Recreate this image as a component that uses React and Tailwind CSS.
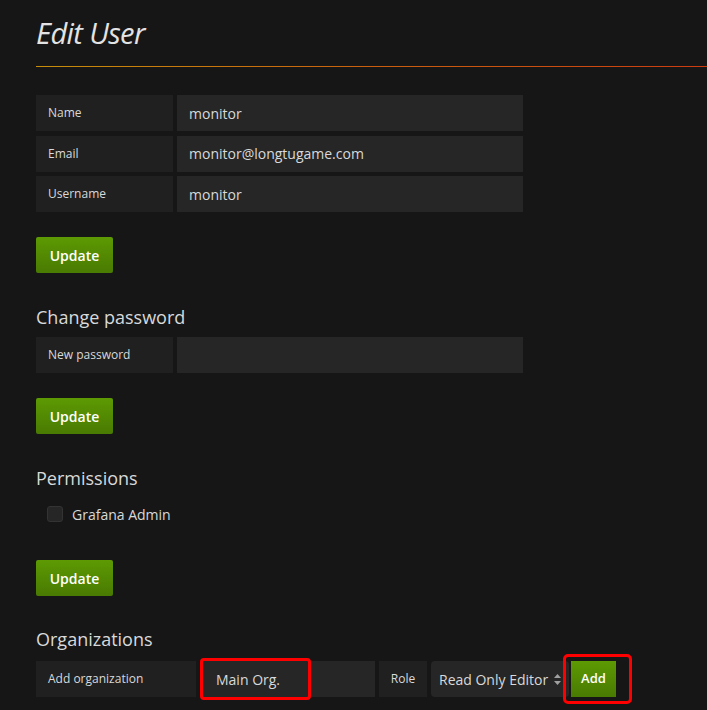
import React from 'react';

const font = { fontFamily: '"Open Sans", "Liberation Sans", sans-serif' };

function Row({ label, value }) {
  return (
    <div className="flex gap-[4px]">
      <div className="w-[137px] h-[36px] bg-[#202020] flex items-center pl-[12px] text-[12px] text-[#d8d9da]">{label}</div>
      <div className="w-[346px] h-[36px] bg-[#262626] flex items-center pl-[12px] text-[14px] text-[#d8d9da]">{value}</div>
    </div>
  );
}

function UpdateButton() {
  return (
    <button className="w-[77px] h-[36px] rounded-[2px] bg-linear-to-b from-[#5d9a03] to-[#497a02] text-white text-[14px] font-semibold">
      Update
    </button>
  );
}

function Heading({ children }) {
  return <h3 className="text-[18px] text-[#d8d9da] leading-none">{children}</h3>;
}

export default function App() {
  return (
    <div className="w-[707px] h-[710px] bg-[#161616] overflow-hidden" style={font}>
      <div className="pl-[36px] pt-[15px]">
        <h1 className="text-[29px] italic font-medium text-[#e3e3e3] tracking-[-0.6px] leading-[36px] h-[51px]">Edit User</h1>
        <div className="h-[1px] bg-linear-to-r from-[#c68d0a] via-[#c95f0e] to-[#cc3b10]" />

        <div className="mt-[28px] flex flex-col gap-[4.5px]">
          <Row label="Name" value="monitor" />
          <Row label="Email" value="monitor@longtugame.com" />
          <Row label="Username" value="monitor" />
        </div>

        <div className="mt-[25px]"><UpdateButton /></div>

        <div className="mt-[35px]"><Heading>Change password</Heading></div>
        <div className="mt-[11px]"><Row label="New password" value="" /></div>
        <div className="mt-[25px]"><UpdateButton /></div>

        <div className="mt-[35px]"><Heading>Permissions</Heading></div>
        <div className="mt-[18px] flex items-center pl-[11px] h-[18px]">
          <span className="w-[16px] h-[16px] rounded-[3px] bg-[#262626] border border-[#333]" />
          <span className="ml-[9px] text-[14px] text-[#d8d9da]">Grafana Admin</span>
        </div>
        <div className="mt-[37px]"><UpdateButton /></div>

        <div className="mt-[34px]"><Heading>Organizations</Heading></div>
        <div className="mt-[13px] flex items-center">
          <div className="w-[160px] h-[36px] bg-[#202020] flex items-center pl-[12px] text-[12px] text-[#d8d9da]">Add organization</div>
          <div className="ml-[4px] w-[175px] h-[36px] bg-[#262626] flex items-center text-[14px] text-[#d8d9da] relative">
            <span className="pl-[16px]">Main Org.</span>
            <span className="absolute left-0 top-[-3px] w-[111px] h-[42px] border-[3px] border-[#ff0000] rounded-[4px]" />
          </div>
          <div className="ml-[4px] w-[48px] h-[36px] bg-[#202020] flex items-center justify-center text-[12px] text-[#d8d9da]">Role</div>
          <div className="ml-[4px] w-[138px] h-[36px] bg-[#262626] rounded-[4px] flex items-center pl-[8px] text-[14px] text-[#d8d9da]">
            <span>Read Only Editor</span>
            <svg className="ml-[6px]" width="7" height="11" viewBox="0 0 7 11">
              <path d="M3.5 0 L7 4 H0 Z M3.5 11 L7 7 H0 Z" fill="#a0a0a0" />
            </svg>
          </div>
          <div className="relative ml-[2px]">
            <button className="w-[45px] h-[36px] bg-linear-to-b from-[#5d9a03] to-[#497a02] text-white text-[13px] font-semibold">Add</button>
            <span className="absolute left-[-8px] top-[-7px] w-[69px] h-[50px] border-[3px] border-[#ff0000] rounded-[5px]" />
          </div>
        </div>
      </div>
    </div>
  );
}
